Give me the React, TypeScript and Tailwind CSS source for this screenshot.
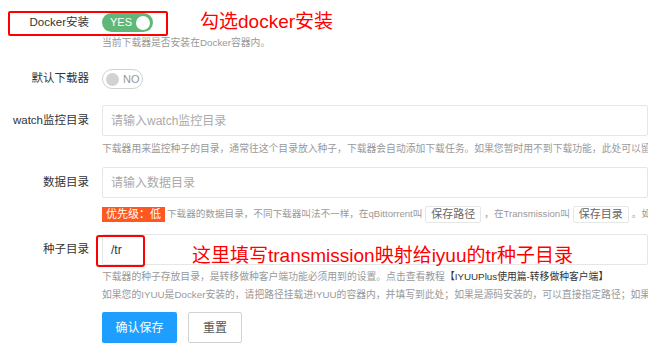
import { type ReactNode } from 'react';

const font = { fontFamily: '"Liberation Sans", "Noto Sans CJK SC", sans-serif' };

function Label({ children }: { children: ReactNode }) {
    return <div className="w-[89px] shrink-0 text-right text-[11.5px] text-[#333]">{children}</div>;
}

function Help({ children }: { children: ReactNode }) {
    return <div className="whitespace-nowrap text-[9.8px] leading-[18px] text-[#999]">{children}</div>;
}

function Rim({ children }: { children: ReactNode }) {
    return (
        <span className="mx-[3px] inline-flex h-[17px] items-center rounded-[2px] border border-[#e6e6e6] bg-white px-[5px] text-[11px] text-[#666]">
            {children}
        </span>
    );
}

function TextInput({ placeholder, value }: { placeholder?: string; value?: string }) {
    return (
        <div className="flex h-[31px] w-[600px] items-center rounded-[2px] border border-[#e6e6e6] bg-white pl-[8px] text-[12px]">
            {value ? <span className="text-[#333]">{value}</span> : <span className="text-[#aaa]">{placeholder}</span>}
        </div>
    );
}

export default function App() {
    return (
        <div className="relative h-[351px] w-[662px] overflow-hidden bg-white" style={font}>
            <div className="w-[648px] overflow-hidden pt-[13px]">
                {/* ── Docker安装 ───────────────────────────── */}
                <div className="flex h-[19px] items-center gap-[13px]">
                    <Label>Docker安装</Label>
                    <div className="flex h-[19px] w-[51px] items-center justify-between rounded-full bg-[#5FB878] pl-[8px] pr-[3px]">
                        <span className="text-[11px] text-white">YES</span>
                        <span className="size-[14px] rounded-full bg-white" />
                    </div>
                </div>
                <div className="ml-[102px] mt-[2px]">
                    <Help>当前下载器是否安装在Docker容器内。</Help>
                </div>

                {/* ── 默认下载器 ───────────────────────────── */}
                <div className="mt-[17px] flex h-[20px] items-center gap-[13px]">
                    <Label>默认下载器</Label>
                    <div className="flex h-[20px] w-[41px] items-center gap-[4px] rounded-full border border-[#d2d2d2] bg-white pl-[3px]">
                        <span className="size-[13px] rounded-full bg-[#d2d2d2]" />
                        <span className="text-[11px] text-[#999]">NO</span>
                    </div>
                </div>

                {/* ── watch监控目录 ─────────────────────────── */}
                <div className="mt-[16px] flex items-center gap-[13px]">
                    <Label>watch监控目录</Label>
                    <TextInput placeholder="请输入watch监控目录" />
                </div>
                <div className="ml-[102px] mt-[4px]">
                    <Help>下载器用来监控种子的目录，通常往这个目录放入种子，下载器会自动添加下载任务。如果您暂时用不到下载功能，此处可以留空。</Help>
                </div>

                {/* ── 数据目录 ─────────────────────────────── */}
                <div className="mt-[9px] flex items-center gap-[13px]">
                    <Label>数据目录</Label>
                    <TextInput placeholder="请输入数据目录" />
                </div>
                <div className="ml-[102px] mt-[8px] flex h-[17px] items-center whitespace-nowrap text-[9.6px] text-[#999]">
                    <span className="mr-[2px] flex h-[15px] items-center bg-[#FF5722] px-[4px] text-[11px] text-white">优先级：低</span>
                    下载器的数据目录，不同下载器叫法不一样，在qBittorrent叫
                    <Rim>保存路径</Rim>
                    ，在Transmission叫
                    <Rim>保存目录</Rim>
                    。如果您的下载器是Docker安装的
                </div>

                {/* ── 种子目录 ─────────────────────────────── */}
                <div className="mt-[11px] flex items-center gap-[13px]">
                    <Label>种子目录</Label>
                    <TextInput value="/tr" />
                </div>
                <div className="ml-[102px] mt-[3px]">
                    <Help>
                        下载器的种子存放目录，是转移做种客户端功能必须用到的设置。点击查看教程
                        <span className="text-[#333]">【IYUUPlus使用篇-转移做种客户端】</span>
                    </Help>
                    <Help>如果您的IYUU是Docker安装的，请把路径挂载进IYUU的容器内，并填写到此处；如果是源码安装的，可以直接指定路径；如果</Help>
                </div>

                {/* ── Buttons ──────────────────────────────── */}
                <div className="ml-[102px] mt-[8px] flex gap-[11px]">
                    <button className="h-[31px] w-[75px] rounded-[2px] bg-[#1E9FFF] text-[12px] text-white">确认保存</button>
                    <button className="h-[31px] w-[54px] rounded-[2px] border border-[#d2d2d2] bg-white text-[12px] text-[#555]">重置</button>
                </div>
            </div>

            {/* ── Annotations ──────────────────────────────── */}
            <div className="absolute left-[8px] top-[11px] h-[25px] w-[160px] rounded-[2px] border-2 border-[#f00]" />
            <div className="absolute left-[200px] top-[9px] text-[19px] leading-[26px] text-[#f00]">勾选docker安装</div>
            <div className="absolute left-[96px] top-[235px] h-[32px] w-[49px] rounded-[3px] border-2 border-[#f00]" />
            <div className="absolute left-[192px] top-[243px] text-[19px] leading-[26px] text-[#f00]">这里填写transmission映射给iyuu的tr种子目录</div>
        </div>
    );
}
